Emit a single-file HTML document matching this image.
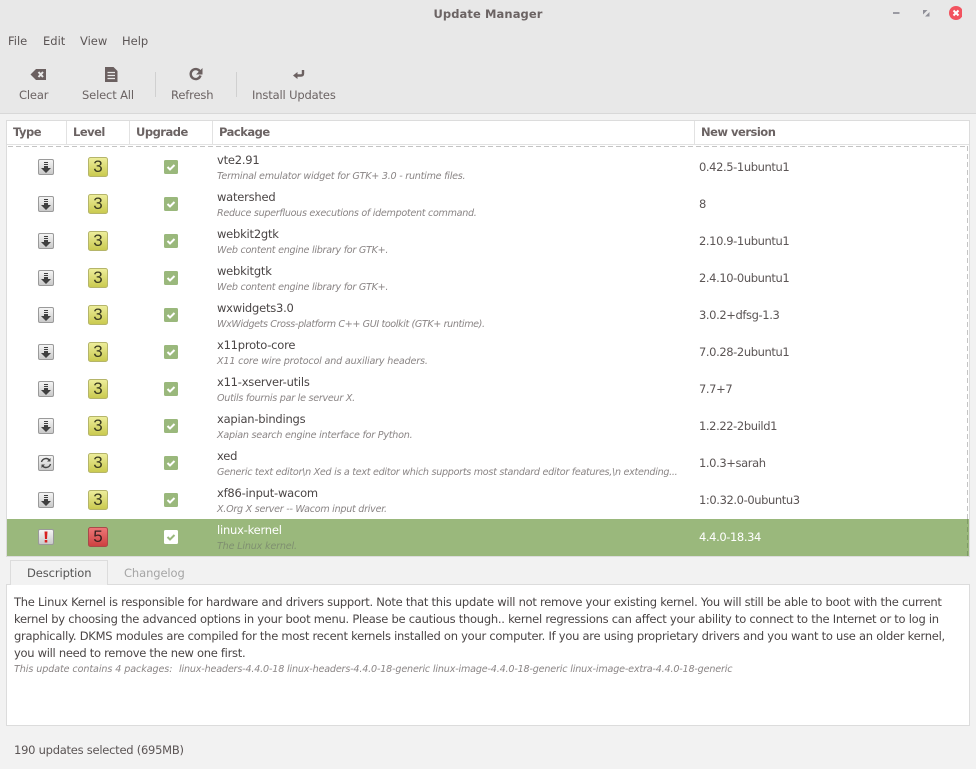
<!DOCTYPE html>
<html><head><meta charset="utf-8">
<style>
html,body{margin:0;padding:0}
body{width:976px;height:769px;position:relative;overflow:hidden;background:#f2f2f2;font-family:"DejaVu Sans","Liberation Sans",sans-serif;font-size:11.5px;color:#5b5555}
.a{position:absolute;white-space:nowrap;line-height:16px}
.b{position:absolute}
.n{left:217px;color:#4a4545;font-size:11.5px;letter-spacing:-.22px}
.d{left:217px;color:#8a8585;font-style:italic;font-size:9.6px;letter-spacing:-.27px}
.v{left:699px;color:#5b5555;letter-spacing:-.4px}
.h{font-weight:bold;color:#6b6363;top:124px;font-size:11.5px;letter-spacing:-.5px}
.t{color:#6b6363;top:87px;font-size:11.5px;letter-spacing:-.15px}
.m{color:#5b5555;top:33px}
.p{left:14px;color:#4a4545;font-size:11.5px;letter-spacing:-.26px}
.g{left:88px;width:20px;text-align:center;font-family:"Liberation Sans",sans-serif;font-size:17px;color:#3a3a20}
svg{position:absolute;display:block}
</style></head><body>
<svg width="0" height="0" style="position:absolute"><defs>
<linearGradient id="g1" x1="0" y1="0" x2="0" y2="1"><stop offset="0" stop-color="#f6f6f6"/><stop offset="1" stop-color="#c8c8c8"/></linearGradient>
<linearGradient id="g3" x1="0" y1="0" x2="0" y2="1"><stop offset="0" stop-color="#eeee9c"/><stop offset="1" stop-color="#c9c94e"/></linearGradient>
<linearGradient id="g5" x1="0" y1="0" x2="0" y2="1"><stop offset="0" stop-color="#ee7878"/><stop offset="1" stop-color="#cc3f3f"/></linearGradient>
<symbol id="dl" viewBox="0 0 16 16"><rect x=".5" y=".5" width="15" height="15" rx="1.5" fill="url(#g1)" stroke="#9a9a9a"/><path d="M6 3h4v1H6zM6 5h4v1H6zM6 7h4v2h3l-5 5-5-5h3z" fill="#3f3f3f"/></symbol>
<symbol id="rf" viewBox="0 0 16 16"><rect x=".5" y=".5" width="15" height="15" rx="1.5" fill="url(#g1)" stroke="#9a9a9a"/><path d="M3.5 7a4.600 4.600 0 0 1 8-1.800M12.500 9a4.600 4.600 0 0 1-8 1.800" fill="none" stroke="#444" stroke-width="1.400"/><path d="M12.500 3v3.500H9zM3.500 13V9.500H7z" fill="#444"/></symbol>
<symbol id="ex" viewBox="0 0 16 16"><rect x=".5" y=".5" width="15" height="15" rx="1.500" fill="url(#g1)" stroke="#9a9a9a"/><path d="M6.500 2.500h3l-.5 7.500H7zM6.700 11h2.600v2.500H6.700z" fill="#d8201f"/></symbol>
<symbol id="l3" viewBox="0 0 20 20"><rect x=".5" y=".5" width="19" height="19" rx="2" fill="url(#g3)" stroke="#b5b56a"/></symbol>
<symbol id="l5" viewBox="0 0 20 20"><rect x=".5" y=".5" width="19" height="19" rx="2" fill="url(#g5)" stroke="#a84a4a"/></symbol>
<symbol id="ck" viewBox="0 0 14 14"><rect width="14" height="14" rx="1.500" fill="#9ab87c"/><path d="M3.500 7l2.500 2.500 4.500-4.500" fill="none" stroke="#fff" stroke-width="2"/></symbol>
<symbol id="ck2" viewBox="0 0 14 14"><rect width="14" height="14" rx="1.500" fill="#fff"/><path d="M3.500 7l2.500 2.500 4.500-4.500" fill="none" stroke="#9ab87c" stroke-width="2"/></symbol>
</defs></svg>

<!-- title + toolbar background -->
<div class="b" style="left:0;top:0;width:976px;height:113px;background:#e8e8e8;border-bottom:1px solid #d8d8d8"></div>
<div class="a" style="left:0;width:976px;text-align:center;top:6px;font-weight:bold;color:#6b6363;font-size:11.500px;letter-spacing:.1px">Update Manager</div>
<svg style="left:890px;top:6px" width="72" height="16" viewBox="0 0 72 16">
<rect x="3" y="6" width="6.500" height="2" fill="#9a9aa2"/>
<path d="M33 4h4.500L33 8.500zM39.500 10.500H35L39.500 6z" fill="#8f8f98"/>
<circle cx="66" cy="7" r="7" fill="#f2535f"/><path d="M63.500 4.500l5 5M68.500 4.500l-5 5" stroke="#fff" stroke-width="2"/>
</svg>

<div class="a m" style="left:8px">File</div>
<div class="a m" style="left:43px">Edit</div>
<div class="a m" style="left:80px">View</div>
<div class="a m" style="left:122px">Help</div>

<svg style="left:30px;top:68px" width="17" height="13" viewBox="0 0 17 13"><path d="M6 1h10v11H6L.5 6.500z" fill="#6b6060"/><path d="M8.500 4l4.500 5M13 4l-4.500 5" stroke="#e8e8e8" stroke-width="2"/></svg>
<svg style="left:105px;top:67px" width="13" height="15" viewBox="0 0 13 15"><path d="M0 0h8.500L12.500 4v11H0z" fill="#6b6060"/><path d="M2.500 5.500h7.500M2.500 8.500h7.500M2.500 11.500h7.500" stroke="#e8e8e8" stroke-width="1.200"/></svg>
<svg style="left:188px;top:67px" width="15" height="14" viewBox="0 0 15 14"><path d="M12 4.500A5 5 0 1 0 12.500 8.500" fill="none" stroke="#6b6060" stroke-width="2.400"/><path d="M14.500 1v6.500H8z" fill="#6b6060"/></svg>
<svg style="left:292px;top:69px" width="13" height="11" viewBox="0 0 13 11"><path d="M11 1v3.500Q11 6.500 9 6.500H4" fill="none" stroke="#6b6060" stroke-width="2.400"/><path d="M5.500 3v7L1 6.500z" fill="#6b6060"/></svg>

<div class="a t" style="left:19px">Clear</div>
<div class="a t" style="left:82px">Select All</div>
<div class="a t" style="left:171px">Refresh</div>
<div class="a t" style="left:252px">Install Updates</div>
<div class="b" style="left:155px;top:72px;width:1px;height:25px;background:#d0d0d0"></div>
<div class="b" style="left:236px;top:72px;width:1px;height:25px;background:#d0d0d0"></div>

<!-- list -->
<div class="b" style="left:6px;top:120px;width:964px;height:437px;background:#fff;border:1px solid #dcdcdc;box-sizing:border-box"></div>
<div class="b" style="left:7px;top:144px;width:962px;height:1px;background:#e2e2e2"></div>
<div class="b" style="left:66px;top:121px;width:1px;height:23px;background:#e2e2e2"></div>
<div class="b" style="left:129px;top:121px;width:1px;height:23px;background:#e2e2e2"></div>
<div class="b" style="left:212px;top:121px;width:1px;height:23px;background:#e2e2e2"></div>
<div class="b" style="left:694px;top:121px;width:1px;height:23px;background:#e2e2e2"></div>
<div class="a h" style="left:13px">Type</div>
<div class="a h" style="left:73px">Level</div>
<div class="a h" style="left:136px">Upgrade</div>
<div class="a h" style="left:219px">Package</div>
<div class="a h" style="left:701px">New version</div>
<div class="b" style="left:8px;top:146px;width:960px;height:1px;background:repeating-linear-gradient(90deg,#c4c4c4 0 5px,transparent 5px 8px)"></div>
<div class="b" style="left:967px;top:146px;width:1px;height:410px;background:repeating-linear-gradient(180deg,#c4c4c4 0 5px,transparent 5px 8px)"></div>

<div class="b" style="left:7px;top:519px;width:962px;height:37px;background:#9ab87c"></div>
<div class="b" style="left:967px;top:519px;width:1px;height:37px;background:repeating-linear-gradient(180deg,#7f9a66 0 5px,transparent 5px 8px)"></div>

<!-- type icons -->
<svg style="left:38px;top:159px" width="16" height="16"><use href="#dl"/></svg>
<svg style="left:38px;top:196px" width="16" height="16"><use href="#dl"/></svg>
<svg style="left:38px;top:233px" width="16" height="16"><use href="#dl"/></svg>
<svg style="left:38px;top:270px" width="16" height="16"><use href="#dl"/></svg>
<svg style="left:38px;top:307px" width="16" height="16"><use href="#dl"/></svg>
<svg style="left:38px;top:344px" width="16" height="16"><use href="#dl"/></svg>
<svg style="left:38px;top:381px" width="16" height="16"><use href="#dl"/></svg>
<svg style="left:38px;top:418px" width="16" height="16"><use href="#dl"/></svg>
<svg style="left:38px;top:455px" width="16" height="16"><use href="#rf"/></svg>
<svg style="left:38px;top:492px" width="16" height="16"><use href="#dl"/></svg>
<svg style="left:38px;top:529px" width="16" height="16"><use href="#ex"/></svg>

<!-- level icons -->
<svg style="left:88px;top:157px" width="20" height="20"><use href="#l3"/></svg>
<svg style="left:88px;top:194px" width="20" height="20"><use href="#l3"/></svg>
<svg style="left:88px;top:231px" width="20" height="20"><use href="#l3"/></svg>
<svg style="left:88px;top:268px" width="20" height="20"><use href="#l3"/></svg>
<svg style="left:88px;top:305px" width="20" height="20"><use href="#l3"/></svg>
<svg style="left:88px;top:342px" width="20" height="20"><use href="#l3"/></svg>
<svg style="left:88px;top:379px" width="20" height="20"><use href="#l3"/></svg>
<svg style="left:88px;top:416px" width="20" height="20"><use href="#l3"/></svg>
<svg style="left:88px;top:453px" width="20" height="20"><use href="#l3"/></svg>
<svg style="left:88px;top:490px" width="20" height="20"><use href="#l3"/></svg>
<svg style="left:88px;top:527px" width="20" height="20"><use href="#l5"/></svg>
<div class="a g" style="top:159px">3</div>
<div class="a g" style="top:196px">3</div>
<div class="a g" style="top:233px">3</div>
<div class="a g" style="top:270px">3</div>
<div class="a g" style="top:307px">3</div>
<div class="a g" style="top:344px">3</div>
<div class="a g" style="top:381px">3</div>
<div class="a g" style="top:418px">3</div>
<div class="a g" style="top:455px">3</div>
<div class="a g" style="top:492px">3</div>
<div class="a g" style="top:529px;color:#3a2020">5</div>

<!-- checks -->
<svg style="left:164px;top:160px" width="14" height="14"><use href="#ck"/></svg>
<svg style="left:164px;top:197px" width="14" height="14"><use href="#ck"/></svg>
<svg style="left:164px;top:234px" width="14" height="14"><use href="#ck"/></svg>
<svg style="left:164px;top:271px" width="14" height="14"><use href="#ck"/></svg>
<svg style="left:164px;top:308px" width="14" height="14"><use href="#ck"/></svg>
<svg style="left:164px;top:345px" width="14" height="14"><use href="#ck"/></svg>
<svg style="left:164px;top:382px" width="14" height="14"><use href="#ck"/></svg>
<svg style="left:164px;top:419px" width="14" height="14"><use href="#ck"/></svg>
<svg style="left:164px;top:456px" width="14" height="14"><use href="#ck"/></svg>
<svg style="left:164px;top:493px" width="14" height="14"><use href="#ck"/></svg>
<svg style="left:164px;top:530px" width="14" height="14"><use href="#ck2"/></svg>

<!-- rows -->
<div class="a n" style="top:152px">vte2.91</div><div class="a d" style="top:169px;letter-spacing:-.24px">Terminal emulator widget for GTK+ 3.0 - runtime files.</div><div class="a v" style="top:159px">0.42.5-1ubuntu1</div>
<div class="a n" style="top:189px">watershed</div><div class="a d" style="top:206px;letter-spacing:-.3px">Reduce superfluous executions of idempotent command.</div><div class="a v" style="top:196px">8</div>
<div class="a n" style="top:226px">webkit2gtk</div><div class="a d" style="top:243px">Web content engine library for GTK+.</div><div class="a v" style="top:233px">2.10.9-1ubuntu1</div>
<div class="a n" style="top:263px">webkitgtk</div><div class="a d" style="top:280px">Web content engine library for GTK+.</div><div class="a v" style="top:270px">2.4.10-0ubuntu1</div>
<div class="a n" style="top:300px">wxwidgets3.0</div><div class="a d" style="top:317px;letter-spacing:-.39px">WxWidgets Cross-platform C++ GUI toolkit (GTK+ runtime).</div><div class="a v" style="top:307px">3.0.2+dfsg-1.3</div>
<div class="a n" style="top:337px">x11proto-core</div><div class="a d" style="top:354px;letter-spacing:-.18px">X11 core wire protocol and auxiliary headers.</div><div class="a v" style="top:344px">7.0.28-2ubuntu1</div>
<div class="a n" style="top:374px">x11-xserver-utils</div><div class="a d" style="top:391px">Outils fournis par le serveur X.</div><div class="a v" style="top:381px">7.7+7</div>
<div class="a n" style="top:411px">xapian-bindings</div><div class="a d" style="top:428px;letter-spacing:-.24px">Xapian search engine interface for Python.</div><div class="a v" style="top:418px">1.2.22-2build1</div>
<div class="a n" style="top:448px">xed</div><div class="a d" style="top:465px;letter-spacing:-.29px">Generic text editor\n Xed is a text editor which supports most standard editor features,\n extending...</div><div class="a v" style="top:455px">1.0.3+sarah</div>
<div class="a n" style="top:485px">xf86-input-wacom</div><div class="a d" style="top:502px">X.Org X server -- Wacom input driver.</div><div class="a v" style="top:492px">1:0.32.0-0ubuntu3</div>
<div class="a n" style="top:522px;color:#fff">linux-kernel</div><div class="a d" style="top:539px;color:#7f8f70;letter-spacing:-.18px">The Linux kernel.</div><div class="a v" style="top:529px;color:#fff">4.4.0-18.34</div>

<!-- tabs / description -->
<div class="b" style="left:6px;top:584px;width:964px;height:142px;background:#fff;border:1px solid #dcdcdc;box-sizing:border-box"></div>
<div class="b" style="left:10px;top:560px;width:98px;height:25px;background:#f2f2f2;border:1px solid #dcdcdc;border-bottom:none;box-sizing:border-box"></div>
<div class="a" style="left:27px;top:565px;color:#555;letter-spacing:-.1px">Description</div>
<div class="a" style="left:124px;top:565px;color:#a5a5a5;letter-spacing:-.1px">Changelog</div>
<div class="a p" style="top:594px">The Linux Kernel is responsible for hardware and drivers support. Note that this update will not remove your existing kernel. You will still be able to boot with the current</div>
<div class="a p" style="top:611px">kernel by choosing the advanced options in your boot menu. Please be cautious though.. kernel regressions can affect your ability to connect to the Internet or to log in</div>
<div class="a p" style="top:628px">graphically. DKMS modules are compiled for the most recent kernels installed on your computer. If you are using proprietary drivers and you want to use an older kernel,</div>
<div class="a p" style="top:645px;letter-spacing:-.29px">you will need to remove the new one first.</div>
<div class="a" style="left:14px;top:662px;font-style:italic;font-size:9.6px;color:#8a8585;letter-spacing:-.09px">This update contains 4 packages:</div>
<div class="a" style="left:179px;top:662px;font-style:italic;font-size:9.6px;color:#8a8585;letter-spacing:-.175px">linux-headers-4.4.0-18 linux-headers-4.4.0-18-generic linux-image-4.4.0-18-generic linux-image-extra-4.4.0-18-generic</div>
<div class="a" style="left:14px;top:742px;color:#5b5555;letter-spacing:-.25px">190 updates selected (695MB)</div>
</body></html>
